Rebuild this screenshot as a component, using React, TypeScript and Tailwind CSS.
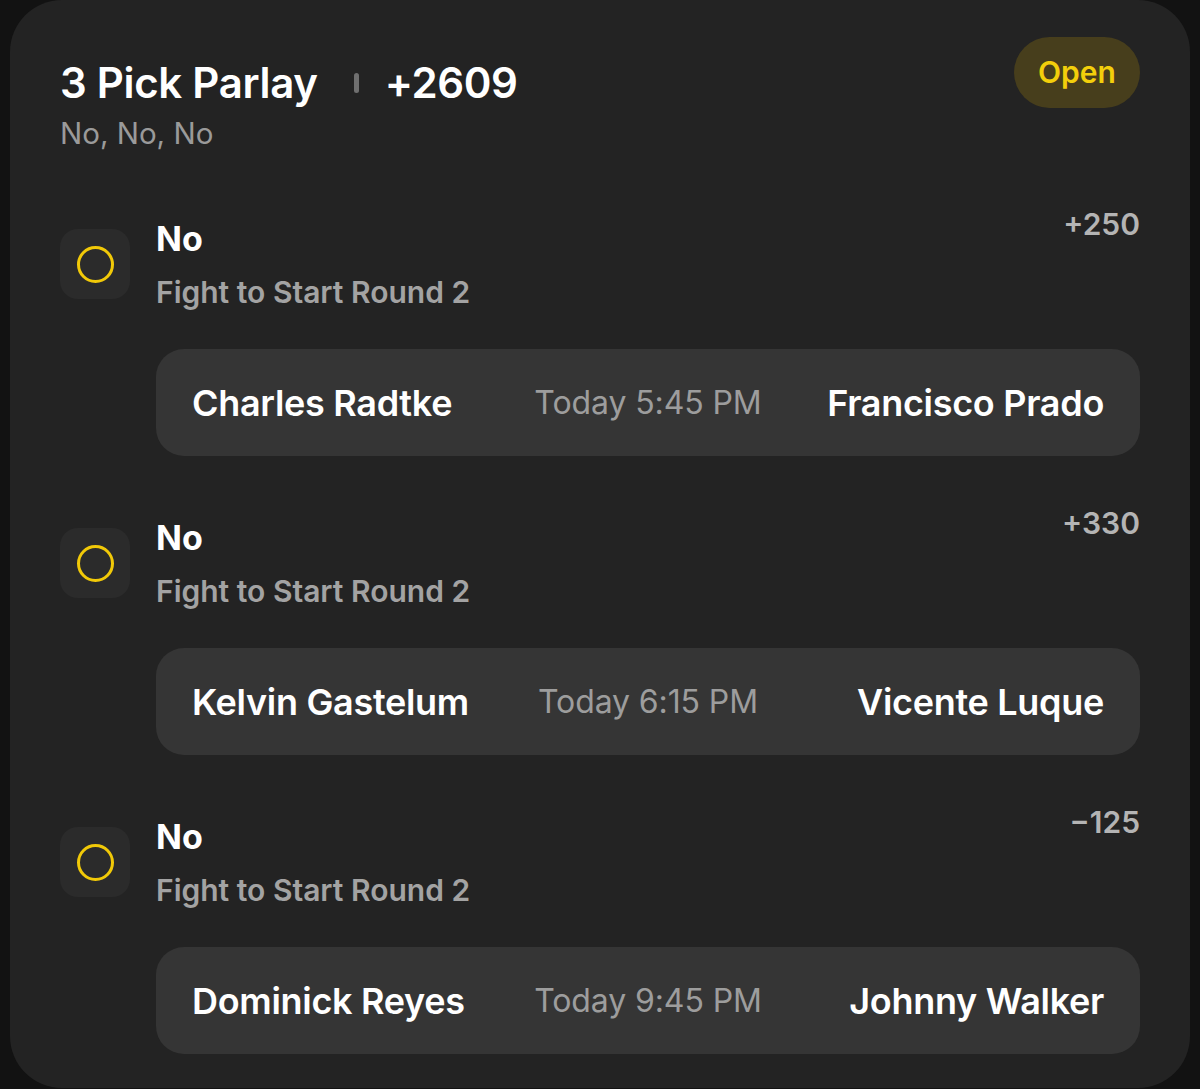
import React from "react";

type Pick = {
  odds: string;
  left: string;
  time: string;
  right: string;
};

const picks: Pick[] = [
  { odds: "+250", left: "Charles Radtke", time: "Today 5:45 PM", right: "Francisco Prado" },
  { odds: "+330", left: "Kelvin Gastelum", time: "Today 6:15 PM", right: "Vicente Luque" },
  { odds: "\u2212125", left: "Dominick Reyes", time: "Today 9:45 PM", right: "Johnny Walker" },
];

const PickRow = ({ pick }: { pick: Pick }) => {
  return (
    <div className="grid grid-cols-[70px_1fr] gap-x-[26px]">
      <div className="mt-[23px] h-[70px] w-[70px] rounded-[18px] bg-[#2b2b2b] flex items-center justify-center">
        <div className="h-[37px] w-[37px] rounded-full border-[3px] border-[#f1c908]"></div>
      </div>

      <div className="flex flex-col">
        <div className="flex items-start justify-between">
          <span className="mt-[13px] text-[34px] leading-[40px] font-bold text-white">No</span>
          <span className="text-[30px] leading-[36px] font-semibold text-[#b4b4b4]">{pick.odds}</span>
        </div>
        <span className="mt-[16px] text-[30px] leading-[34px] font-semibold text-[#a3a3a3]">
          Fight to Start Round 2
        </span>

        <div className="mt-[40px] h-[107px] rounded-[28px] bg-[#353535] px-[36px] grid grid-cols-[1fr_auto_1fr] items-center">
          <span className="text-[36px] font-semibold text-white tracking-[-0.3px]">{pick.left}</span>
          <span className="text-[32px] font-normal text-[#9d9d9d] tracking-[-0.1px]">{pick.time}</span>
          <span className="justify-self-end text-[36px] font-semibold text-white tracking-[-0.3px]">
            {pick.right}
          </span>
        </div>
      </div>
    </div>
  );
};

export default function App() {
  return (
    <div className="min-h-[1089px] w-[1200px] bg-[#121212] pl-[10px] pr-[10px] pb-px font-['Inter',sans-serif]">
      <div className="h-[1088px] rounded-[52px] bg-[#232323] pl-[50px] pr-[50px] pt-[37px]">
        <div className="flex items-start justify-between">
          <div className="mt-[21px] flex flex-col">
            <div className="flex items-center">
              <span className="text-[42px] leading-[50px] font-semibold text-white tracking-[-0.3px]">
                3 Pick Parlay
              </span>
              <span className="ml-[36px] mr-[26px] h-[20px] w-[5px] rounded-full bg-[#6f6f6f]"></span>
              <span className="text-[42px] leading-[50px] font-semibold text-white tracking-[-0.4px]">
                +2609
              </span>
            </div>
            <span className="mt-[8px] text-[29.5px] leading-[34px] font-normal text-[#9a9a9a]">
              No, No, No
            </span>
          </div>

          <div className="h-[71px] w-[126px] rounded-full bg-[#473e1c] flex items-center justify-center">
            <span className="text-[30px] font-semibold text-[#f3cf0b]">Open</span>
          </div>
        </div>

        <div className="mt-[56px] flex flex-col gap-[49px]">
          {picks.map((p) => (
            <PickRow key={p.left} pick={p} />
          ))}
        </div>
      </div>
    </div>
  );
}
